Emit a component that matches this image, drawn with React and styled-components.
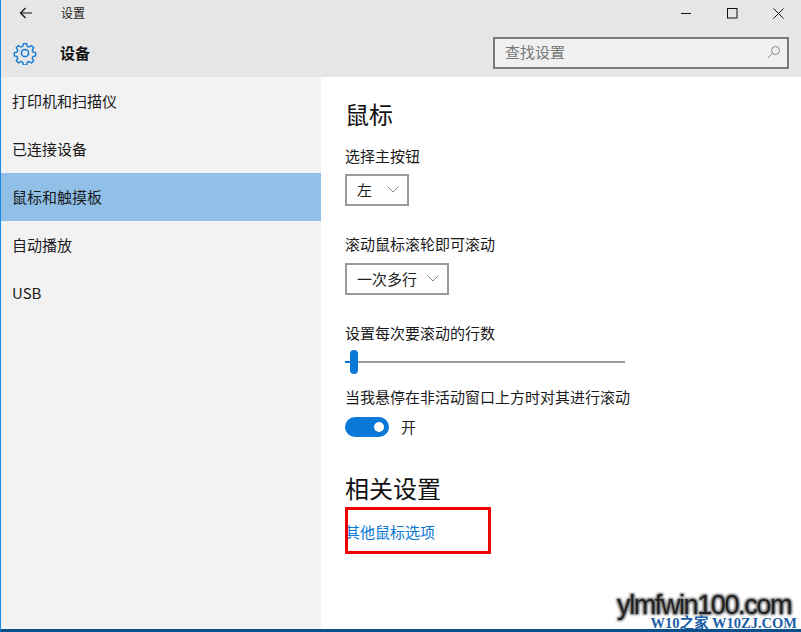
import styled, { createGlobalStyle } from "styled-components";

const GlobalStyle = createGlobalStyle`
  html, body { margin: 0; padding: 0; background: #fff; }
  * { box-sizing: border-box; }
  body { font-family: "Noto Sans CJK SC", "Noto Sans", sans-serif; color: #111; }
`;

const Win = styled.div`
  position: relative;
  width: 801px;
  height: 632px;
  display: flex;
  flex-direction: column;
  overflow: hidden;
  border-left: 1px solid #1a8ae2;
  border-bottom: 3px solid #0b4f8c;
`;

const Header = styled.header`
  height: 77px;
  flex: none;
  background: #e6e6e6;
  display: flex;
  flex-direction: column;
`;

const TitleRow = styled.div`
  height: 26px;
  display: flex;
  align-items: center;
  padding-left: 18px;
  font-size: 12px;
  line-height: 16px;
  color: #222;
`;

const TitleText = styled.span`
  margin-left: 28px;
  margin-top: -1px;
  flex: 1;
`;

const WinBtn = styled.div`
  width: 46px;
  height: 26px;
  display: flex;
  align-items: center;
  justify-content: center;
`;

const Controls = styled.div`
  display: flex;
`;

const BarRow = styled.div`
  flex: 1;
  display: flex;
  align-items: center;
  padding: 2px 12px 0 12px;
`;

const PageName = styled.span`
  margin-left: 23px;
  margin-top: -1px;
  font-size: 15px;
  font-weight: 700;
  flex: 1;
  color: #111;
`;

const Search = styled.div`
  width: 296px;
  height: 32px;
  border: 2px solid #7a7a7a;
  background: #f0f0f0;
  display: flex;
  align-items: center;
  justify-content: space-between;
  padding: 0 6px 2px 10px;
  font-size: 15px;
  color: #777;
`;

const Body = styled.div`
  flex: 1;
  display: flex;
  min-height: 0;
`;

const Sidebar = styled.nav`
  width: 320px;
  flex: none;
  background: #f2f2f2;
`;

const NavItem = styled.div`
  height: 48px;
  display: flex;
  align-items: center;
  padding: 0 0 2px 11px;
  font-size: 15px;
  color: #1a1a1a;
  background: ${(p) => (p.$active ? "#90c0e8" : "transparent")};
`;

const Main = styled.main`
  flex: 1;
  padding: 19px 0 0 24px;
  display: flex;
  flex-direction: column;
  align-items: flex-start;
  background: #fff;
`;

const Heading = styled.h2`
  margin: ${(p) => p.$top || 0}px 0 0;
  font-size: 24px;
  font-weight: 400;
  line-height: 36px;
  color: #111;
`;

const Label = styled.div`
  margin-top: ${(p) => p.$top}px;
  font-size: 15px;
  line-height: 22px;
  color: #1a1a1a;
`;

const Select = styled.div`
  margin-top: ${(p) => p.$top}px;
  width: ${(p) => p.$w}px;
  height: 32px;
  border: 2px solid #999;
  display: flex;
  align-items: center;
  justify-content: space-between;
  padding: 0 8px 2px 10px;
  font-size: 15px;
  color: #222;
`;

const Slider = styled.div`
  position: relative;
  margin-top: 6px;
  width: 280px;
  height: 24px;
  display: flex;
  align-items: center;
`;

const Track = styled.div`
  width: 100%;
  height: 2px;
  background: #999;
`;

const Filled = styled.div`
  position: absolute;
  left: 0;
  top: 11px;
  width: 6px;
  height: 2px;
  background: #0a78d7;
`;

const Thumb = styled.div`
  position: absolute;
  left: 5px;
  top: 0;
  width: 8px;
  height: 24px;
  border-radius: 4px;
  background: #0a78d7;
`;

const ToggleRow = styled.div`
  margin-top: 8px;
  display: flex;
  align-items: center;
  gap: 12px;
  font-size: 15px;
  color: #222;
`;

const Toggle = styled.div`
  width: 44px;
  height: 20px;
  border-radius: 10px;
  background: #0a78d7;
  display: flex;
  align-items: center;
  justify-content: flex-end;
  padding-right: 5px;
`;

const Knob = styled.div`
  width: 10px;
  height: 10px;
  border-radius: 50%;
  background: #fff;
`;

const Link = styled.a`
  margin-top: 15px;
  font-size: 15px;
  line-height: 22px;
  color: #0a78d7;
`;

const RedBox = styled.div`
  position: absolute;
  left: 344px;
  top: 507px;
  width: 146px;
  height: 47px;
  border: 3px solid #f00000;
  border-radius: 1px;
  pointer-events: none;
`;

const Watermark = styled.div`
  position: absolute;
  right: 4px;
  bottom: 0;
  text-align: right;
  pointer-events: none;
`;

const MarkMain = styled.div`
  margin: 0 6px 2px 0;
  font-family: "Liberation Sans", sans-serif;
  font-size: 27px;
  line-height: 20px;
  letter-spacing: -1.4px;
  color: #222;
  text-shadow: 0 0 3px #8a8a8a, 1px 1px 2px #8a8a8a, -1px -1px 2px #8a8a8a, 1px -1px 2px #8a8a8a, -1px 1px 2px #8a8a8a;
`;

const MarkSub = styled.div`
  font-family: "Liberation Serif", "Noto Sans CJK SC", serif;
  font-size: 14.5px;
  line-height: 12px;
  font-weight: 700;
  color: #1e5fa8;
`;

const Gear = () => (
  <svg width="24" height="24" viewBox="0 0 24 24" fill="none" stroke="#0a78d7" strokeWidth="1.5" strokeLinejoin="round">
    <circle cx="12" cy="12" r="3.6" />
    <path d="M10.2 1.5h3.6l.6 3 2.2.9 2.6-1.7 2.5 2.5-1.7 2.6.9 2.2 3 .6v3.6l-3 .6-.9 2.2 1.7 2.6-2.5 2.5-2.6-1.7-2.2.9-.6 3h-3.6l-.6-3-2.2-.9-2.6 1.7-2.5-2.5 1.7-2.6-.9-2.2-3-.6v-3.6l3-.6.9-2.2-1.7-2.6 2.5-2.5 2.6 1.7 2.2-.9z" transform="translate(12 12) scale(.9) translate(-12 -12)" />
  </svg>
);

const Chevron = () => (
  <svg width="12" height="7" viewBox="0 0 12 7" fill="none" stroke="#888" strokeWidth="1">
    <path d="M.5.5L6 6 11.5.5" />
  </svg>
);

export default function App() {
  return (
    <>
      <GlobalStyle />
      <Win>
        <Header>
          <TitleRow>
            <svg width="14" height="12" viewBox="0 0 14 12" fill="none" stroke="#111" strokeWidth="1.2">
              <path d="M13 6H1.5M6.5 1l-5 5 5 5" />
            </svg>
            <TitleText>设置</TitleText>
            <Controls>
              <WinBtn>
                <svg width="11" height="11" viewBox="0 0 11 11" stroke="#111" strokeWidth="1"><path d="M0 5.5h10" /></svg>
              </WinBtn>
              <WinBtn>
                <svg width="11" height="11" viewBox="0 0 11 11" fill="none" stroke="#111" strokeWidth="1"><rect x=".5" y=".5" width="9.5" height="9.5" /></svg>
              </WinBtn>
              <WinBtn>
                <svg width="11" height="11" viewBox="0 0 11 11" fill="none" stroke="#111" strokeWidth="1"><path d="M.5.5l10 10M10.5.5l-10 10" /></svg>
              </WinBtn>
            </Controls>
          </TitleRow>
          <BarRow>
            <Gear />
            <PageName>设备</PageName>
            <Search>
              <span>查找设置</span>
              <svg width="14" height="14" viewBox="0 0 14 14" fill="none" stroke="#888" strokeWidth="1">
                <circle cx="8.5" cy="5.5" r="4" />
                <path d="M5.6 8.4L1 13" />
              </svg>
            </Search>
          </BarRow>
        </Header>
        <Body>
          <Sidebar>
            <NavItem>打印机和扫描仪</NavItem>
            <NavItem>已连接设备</NavItem>
            <NavItem $active>鼠标和触摸板</NavItem>
            <NavItem>自动播放</NavItem>
            <NavItem>USB</NavItem>
          </Sidebar>
          <Main>
            <Heading>鼠标</Heading>
            <Label $top={13}>选择主按钮</Label>
            <Select $top={7} $w={64}>左<Chevron /></Select>
            <Label $top={27}>滚动鼠标滚轮即可滚动</Label>
            <Select $top={8} $w={104}>一次多行<Chevron /></Select>
            <Label $top={27}>设置每次要滚动的行数</Label>
            <Slider>
              <Track />
              <Filled />
              <Thumb />
            </Slider>
            <Label $top={12}>当我悬停在非活动窗口上方时对其进行滚动</Label>
            <ToggleRow>
              <Toggle><Knob /></Toggle>
              开
            </ToggleRow>
            <Heading $top={33}>相关设置</Heading>
            <Link>其他鼠标选项</Link>
          </Main>
        </Body>
        <RedBox />
        <Watermark>
          <MarkMain>ylmfwin100.com</MarkMain>
          <MarkSub>W10之家 W10ZJ.COM</MarkSub>
        </Watermark>
      </Win>
    </>
  );
}
